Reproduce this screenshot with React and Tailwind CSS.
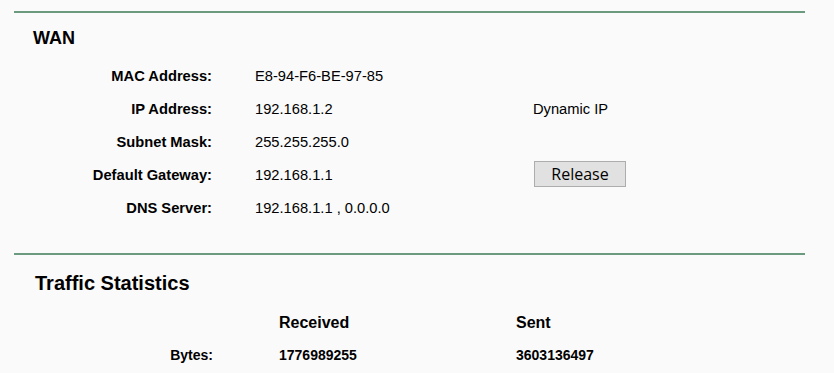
import React from 'react'

const wanRows = [
  { label: 'MAC Address:', value: 'E8-94-F6-BE-97-85' },
  { label: 'IP Address:', value: '192.168.1.2', extra: 'Dynamic IP' },
  { label: 'Subnet Mask:', value: '255.255.255.0' },
  { label: 'Default Gateway:', value: '192.168.1.1', button: 'Release' },
  { label: 'DNS Server:', value: '192.168.1.1 , 0.0.0.0' },
]

export default function App() {
  return (
    <div className="w-[834px] h-[373px] overflow-hidden bg-[#fafafa] pt-[11px] text-black" style={{ fontFamily: '"Liberation Sans", Arial, sans-serif' }}>
      <div className="ml-[14px] w-[791px] h-[2px] bg-[#6b9a7f]" />

      <h2 className="mt-[15px] pl-[33px] text-[18px] leading-[20px] font-bold">WAN</h2>

      <div className="mt-[12px] grid grid-cols-[255px_278px_1fr]">
        {wanRows.map((r) => (
          <React.Fragment key={r.label}>
            <div className="pr-[43px] text-right text-[14.7px] leading-[33px] font-bold">{r.label}</div>
            <div className="text-[14.7px] leading-[33px]">{r.value}</div>
            <div className="flex h-[33px] items-start text-[14.7px] leading-[33px]">
              {r.extra && <span>{r.extra}</span>}
              {r.button && (
                <button
                  className="mt-[2px] ml-[1px] h-[26px] w-[92px] border border-[#adadad] bg-[#e1e1e1] text-[16px] leading-[22px] text-black"
                  style={{ fontFamily: '"Open Sans", sans-serif' }}
                >
                  {r.button}
                </button>
              )}
            </div>
          </React.Fragment>
        ))}
      </div>

      <div className="mt-[28px] ml-[14px] w-[791px] h-[2px] bg-[#6b9a7f]" />

      <h2 className="mt-[16px] pl-[35px] text-[20px] leading-[24px] font-bold">Traffic Statistics</h2>

      <div className="mt-[12px] grid grid-cols-[279px_237px_1fr] font-bold">
        <div />
        <div className="text-[16px] leading-[32px]">Received</div>
        <div className="text-[16px] leading-[32px]">Sent</div>
        <div className="pr-[66px] text-right text-[14px] leading-[32px]">Bytes:</div>
        <div className="text-[14px] leading-[32px]">1776989255</div>
        <div className="text-[14px] leading-[32px]">3603136497</div>
      </div>
    </div>
  )
}
